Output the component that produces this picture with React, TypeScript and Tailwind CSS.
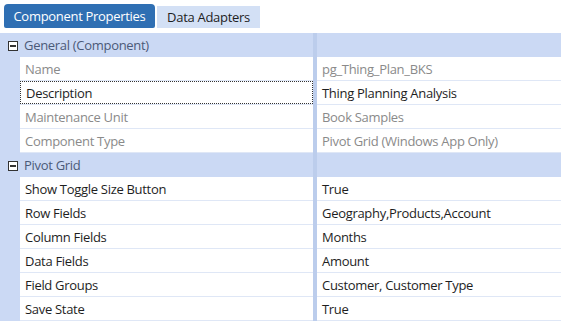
import { ReactNode } from "react";

type Prop = { name: string; value: string; readOnly?: boolean; focused?: boolean };

const general: Prop[] = [
  { name: "Name", value: "pg_Thing_Plan_BKS", readOnly: true },
  { name: "Description", value: "Thing Planning Analysis", focused: true },
  { name: "Maintenance Unit", value: "Book Samples", readOnly: true },
  { name: "Component Type", value: "Pivot Grid (Windows App Only)", readOnly: true },
];

const pivot: Prop[] = [
  { name: "Show Toggle Size Button", value: "True" },
  { name: "Row Fields", value: "Geography,Products,Account" },
  { name: "Column Fields", value: "Months" },
  { name: "Data Fields", value: "Amount" },
  { name: "Field Groups", value: "Customer, Customer Type" },
  { name: "Save State", value: "True" },
];

function MinusBox() {
  return (
    <svg width="10" height="10" viewBox="0 0 10 10" className="shrink-0">
      <rect x="0.5" y="0.5" width="9" height="9" fill="#fff" stroke="#333" />
      <rect x="2" y="4" width="6" height="2" fill="#333" />
    </svg>
  );
}

function Category({ title }: { title: string }) {
  return (
    <div className="flex h-[24px] bg-[#cbd9f4]">
      <div className="flex w-[313px] items-center gap-[6px] pl-[8px] pt-[1px] text-[#4b5a78]">
        <MinusBox />
        <span>{title}</span>
      </div>
      <div className="w-[4px] bg-[#bccdec]" />
      <div className="flex-1" />
    </div>
  );
}

function Row({ p }: { p: Prop }) {
  const color = p.readOnly ? "text-[#8a8a8a]" : "text-[#1e1e1e]";
  return (
    <div className="flex h-[24px]">
      <div className="w-[20px] bg-[#cbd9f4]" />
      <div className="w-[293px] border-b border-[#dfe7f6] bg-white">
        <div
          className={
            "flex h-full items-center pl-[5px] pt-[2px] " +
            color +
            (p.focused ? " border border-dotted border-[#333]" : "")
          }
        >
          {p.name}
        </div>
      </div>
      <div className="w-[4px] bg-[#bccdec]" />
      <div className={"flex flex-1 items-center border-b border-[#dfe7f6] bg-white pl-[5px] pt-[2px] " + color}>
        {p.value}
      </div>
    </div>
  );
}

function Tab({ children, active }: { children: ReactNode; active?: boolean }) {
  return active ? (
    <div className="flex h-[24px] w-[151px] items-center justify-center rounded-t-[4px] rounded-b-[2px] bg-[#2f6fb3] pt-[1px] text-white">
      {children}
    </div>
  ) : (
    <div className="flex h-[22px] w-[103px] items-center justify-center bg-[#d3e0f5] pt-[1px] text-[#1e1e1e]">
      {children}
    </div>
  );
}

export default function App() {
  return (
    <div
      className="h-[327px] w-[561px] overflow-hidden bg-white text-[13px] tracking-[-0.3px]"
      style={{ fontFamily: '"Open Sans", "Noto Sans", sans-serif' }}
    >
      <div className="flex h-[33px] items-end gap-[2px] pb-[5px] pl-[4px]">
        <Tab active>Component Properties</Tab>
        <Tab>Data Adapters</Tab>
      </div>
      <Category title="General (Component)" />
      {general.map((p) => (
        <Row key={p.name} p={p} />
      ))}
      <Category title="Pivot Grid" />
      {pivot.map((p) => (
        <Row key={p.name} p={p} />
      ))}
    </div>
  );
}
